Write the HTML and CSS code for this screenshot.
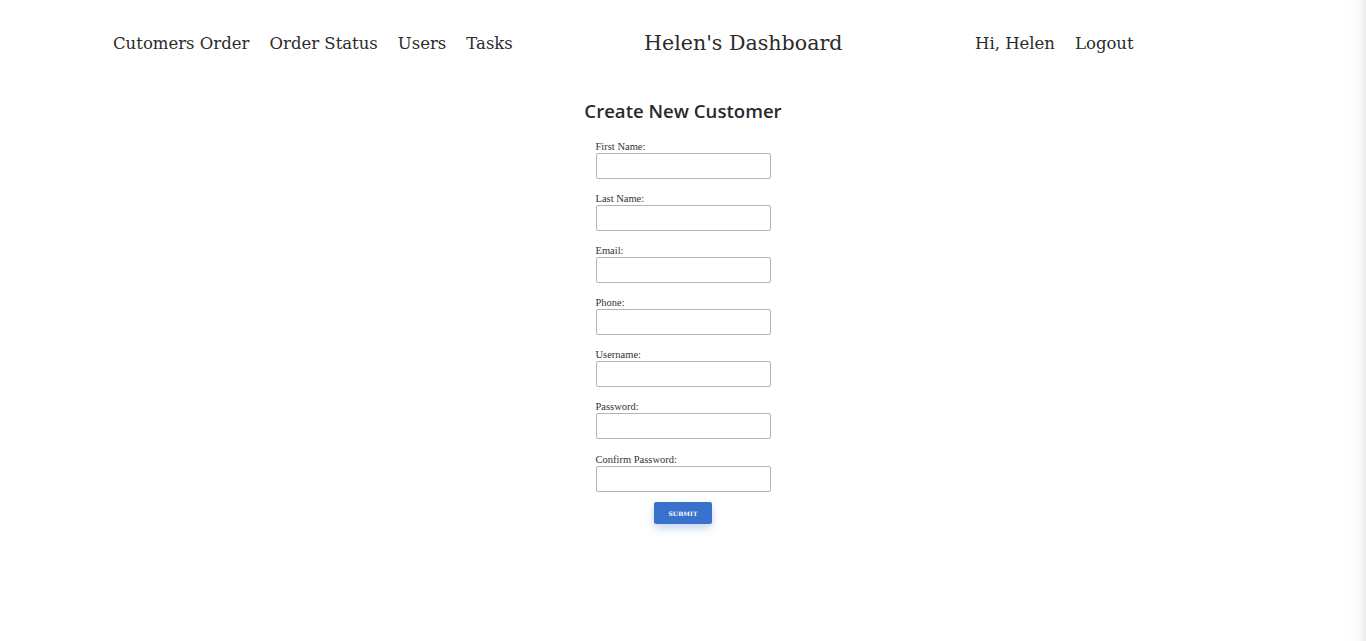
FILE: index.html
```html
<!DOCTYPE html>
<html>
<head>
<meta charset="utf-8">
<link rel="stylesheet" href="styles.css">
</head>
<body>
<div class="page">
  <header class="nav">
    <div class="nav-left">
      <a class="nav-link">Cutomers Order</a>
      <a class="nav-link">Order Status</a>
      <a class="nav-link">Users</a>
      <a class="nav-link">Tasks</a>
    </div>
    <div class="nav-title">Helen's Dashboard</div>
    <div class="nav-right">
      <a class="nav-link">Hi, Helen</a>
      <a class="nav-link">Logout</a>
    </div>
  </header>
  <main class="main">
    <h2 class="heading">Create New Customer</h2>
    <form class="form">
      <div class="field"><label>First Name:</label><input type="text"></div>
      <div class="field"><label>Last Name:</label><input type="text"></div>
      <div class="field"><label>Email:</label><input type="text"></div>
      <div class="field"><label>Phone:</label><input type="text"></div>
      <div class="field"><label>Username:</label><input type="text"></div>
      <div class="field"><label>Password:</label><input type="password"></div>
      <div class="field field-last"><label>Confirm Password:</label><input type="password"></div>
      <button type="button" class="submit">SUBMIT</button>
    </form>
  </main>
</div>
<div class="edge"></div>
</body>
</html>
```
FILE: styles.css
```css
html, body {
  margin: 0;
  padding: 0;
  background: #fff;
  color: #222;
}
.page {
  width: 1366px;
  height: 641px;
}
.nav {
  display: flex;
  align-items: center;
  padding: 28px 0 0 113px;
  height: 30px;
  font-family: "DejaVu Serif", serif;
  color: #2b2b2b;
}
.nav-left {
  display: flex;
  gap: 20px;
  width: 531px;
}
.nav-link {
  font-size: 16.5px;
  color: #2b2b2b;
}
.nav-title {
  font-size: 20.6px;
  width: 331px;
  color: #2b2b2b;
}
.nav-right {
  display: flex;
  gap: 20px;
}
.main {
  display: flex;
  flex-direction: column;
  align-items: center;
  padding-top: 40px;
}
.heading {
  margin: 0 0 18px 0;
  font-family: "Open Sans", sans-serif;
  font-weight: 600;
  font-size: 18.6px;
  color: #2a2a2a;
}
.form {
  display: flex;
  flex-direction: column;
  align-items: center;
  width: 175px;
}
.field {
  display: flex;
  flex-direction: column;
  width: 175px;
  margin-bottom: 14px;
}
.field-last {
  margin-top: 1px;
  margin-bottom: 10px;
}
.field label {
  font-family: "Liberation Serif", serif;
  font-size: 10.5px;
  color: #333;
  line-height: 11px;
  margin-bottom: 1px;
}
.field input {
  box-sizing: border-box;
  width: 175px;
  height: 26px;
  border: 1px solid #b4b4b4;
  border-radius: 2px;
  padding: 0 6px;
  margin: 0;
}
.submit {
  width: 58px;
  height: 22px;
  border: none;
  border-radius: 2px;
  background: #3a71cd;
  color: #fff;
  font-family: "DejaVu Serif", serif;
  font-weight: bold;
  font-size: 6px;
  letter-spacing: 0.1px;
  box-shadow: 0 4px 8px rgba(58, 113, 205, 0.3);
  padding: 0;
}
.edge {
  position: fixed;
  top: 0;
  right: 0;
  width: 18px;
  height: 641px;
  background: linear-gradient(to right, rgba(0,0,0,0), rgba(0,0,0,0.02) 60%, rgba(0,0,0,0.08));
}
```
